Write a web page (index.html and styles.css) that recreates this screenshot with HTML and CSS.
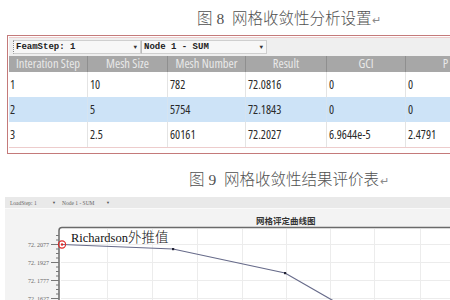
FILE: index.html
```html
<!DOCTYPE html>
<html lang="zh">
<head>
<meta charset="utf-8">
<link rel="stylesheet" href="styles.css">
</head>
<body>
<p class="cap cap1">图 8&nbsp; 网格收敛性分析设置<span class="ret">↵</span></p>
<div class="frame">
  <div class="inner">
    <div class="tb">
      <div class="combo c1"><span>FeamStep: 1</span><span class="arr">▼</span></div>
      <div class="combo c2"><span>Node 1 - SUM</span><span class="arr">▼</span></div>
    </div>
    <div class="grid">
      <div class="h">Interation Step</div>
      <div class="h">Mesh Size</div>
      <div class="h">Mesh Number</div>
      <div class="h">Result</div>
      <div class="h">GCI</div>
      <div class="h">P</div>

      <div class="c">1</div>
      <div class="c">10</div>
      <div class="c">782</div>
      <div class="c">72.0816</div>
      <div class="c">0</div>
      <div class="c">0</div>

      <div class="c sel">2</div>
      <div class="c sel">5</div>
      <div class="c sel">5754</div>
      <div class="c sel">72.1843</div>
      <div class="c sel">0</div>
      <div class="c sel">0</div>

      <div class="c">3</div>
      <div class="c">2.5</div>
      <div class="c">60161</div>
      <div class="c">72.2027</div>
      <div class="c">6.9644e-5</div>
      <div class="c">2.4791</div>
    </div>
  </div>
</div>
<p class="cap cap2">图 9&nbsp; 网格收敛性结果评价表<span class="ret">↵</span></p>
<div class="chart">
  <div class="ctb">
    <span class="cc cc1">LoadStep: 1</span><span class="carr">▼</span>
    <span class="cc cc2">Node 1 - SUM</span><span class="carr">▼</span>
  </div>
  <svg class="plot" width="450" height="92" viewBox="0 0 450 92" xmlns="http://www.w3.org/2000/svg">
    <rect x="5" y="0" width="445" height="92" fill="#f3f3f3"/>
    <line x1="5" y1="0.5" x2="450" y2="0.5" stroke="#fafafa"/>
    <text x="256" y="16" font-family="Noto Sans CJK SC, sans-serif" font-size="8.5" font-weight="700" fill="#333">网格评定曲线图</text>
    <rect x="59" y="19.5" width="420" height="100" rx="3" fill="#fff" stroke="#6a6a6a" stroke-width="1.5"/>
    <g stroke="#ececec" stroke-width="1">
      <line x1="107.5" y1="21" x2="107.5" y2="92"/>
      <line x1="152.5" y1="21" x2="152.5" y2="92"/>
      <line x1="197.5" y1="21" x2="197.5" y2="92"/>
      <line x1="242.5" y1="21" x2="242.5" y2="92"/>
      <line x1="286.5" y1="21" x2="286.5" y2="92"/>
      <line x1="330.5" y1="21" x2="330.5" y2="92"/>
      <line x1="374.5" y1="21" x2="374.5" y2="92"/>
      <line x1="420.5" y1="21" x2="420.5" y2="92"/>
      <line x1="61" y1="36.5" x2="450" y2="36.5"/>
      <line x1="61" y1="54.5" x2="450" y2="54.5"/>
      <line x1="61" y1="72.5" x2="450" y2="72.5"/>
      <line x1="61" y1="90.5" x2="450" y2="90.5"/>
    </g>
    <g font-family="Liberation Serif, serif" font-size="6" fill="#666" text-anchor="end">
      <text x="49" y="38.5">72. 2077</text>
      <text x="49" y="56.5">72. 1927</text>
      <text x="49" y="74.5">72. 1777</text>
      <text x="49" y="92.5">72. 1627</text>
    </g>
    <g stroke="#777" stroke-width="1">
      <line x1="51" y1="36.5" x2="59" y2="36.5"/>
      <line x1="51" y1="54.5" x2="59" y2="54.5"/>
      <line x1="51" y1="72.5" x2="59" y2="72.5"/>
      <line x1="51" y1="90.5" x2="59" y2="90.5"/>
      <path d="M56 27.5h3M56 32h3M56 41h3M56 45.5h3M56 50h3M56 59h3M56 63.5h3M56 68h3M56 77h3M56 81.5h3M56 86h3"/>
    </g>
    <polyline points="62,36.5 173,41 285,65 332,92 345,100" fill="none" stroke="#676b8a" stroke-width="1.2"/>
    <rect x="172" y="40" width="2.2" height="2.2" fill="#223"/>
    <rect x="284" y="64" width="2.2" height="2.2" fill="#223"/>
    <circle cx="62" cy="36.5" r="3.6" fill="none" stroke="#e02828" stroke-width="1.1"/>
    <circle cx="62" cy="36.5" r="1.2" fill="#e02828"/>
    <text x="71" y="33.7" font-family="Liberation Serif, serif" font-size="12.5" fill="#111">Richardson<tspan font-family="Noto Sans CJK SC, sans-serif" font-size="13.5" font-weight="300">外推值</tspan></text>
  </svg>
</div>
</body>
</html>
```

FILE: styles.css
```css
html, body {
  margin: 0;
  padding: 0;
  overflow: hidden;
  background: #fff;
}
body {
  width: 450px;
  height: 300px;
  font-family: "Liberation Serif", "Noto Sans CJK SC", serif;
}
.cap {
  margin: 0;
  box-sizing: border-box;
  font-size: 15.5px;
  line-height: 20px;
  color: #505050;
  font-weight: 300;
  white-space: nowrap;
  font-family: "Liberation Serif", "Noto Sans CJK SC", serif;
}
.cap1 {
  height: 35px;
  padding: 9px 0 0 197px;
}
.cap2 {
  height: 39px;
  padding: 16px 0 0 189px;
}
.ret {
  font-size: 11px;
  color: #8a8a8a;
  margin-left: 1px;
}
.frame {
  margin-left: 7px;
  width: 443px;
  height: 119px;
  overflow: hidden;
  box-sizing: border-box;
  border: 1px solid #c47a7a;
  border-right: 0;
  padding: 1px 0 5px 1px;
  background: #fff;
}
.inner {
  width: 480px;
  border-top: 1px solid #edcccc;
  border-bottom: 1px solid #edcccc;
}
.tb {
  height: 18px;
  background: #efefef;
  display: flex;
  align-items: center;
  padding-left: 4px;
  box-sizing: border-box;
}
.combo {
  height: 14px;
  box-sizing: border-box;
  border: 1px solid #cfcfcf;
  background: #f7f7f7;
  display: flex;
  align-items: center;
  justify-content: space-between;
  padding: 0 3px 0 2px;
  font-family: "Liberation Mono", monospace;
  font-weight: 700;
  font-size: 9px;
  color: #222;
}
.c1 {
  width: 128px;
  border-left: 1px dotted #888;
}
.c2 {
  width: 126px;
  border-left-color: #bbb;
}
.arr {
  font-size: 6px;
  color: #333;
}
.grid {
  display: grid;
  grid-template-columns: 78px 80px 78px 81px 79px 80px;
  grid-template-rows: 16px 25px 25px 25px;
  font-family: "Open Sans", "Noto Sans", sans-serif;
  font-stretch: 78%;
}
.h {
  background: #a7a7a7;
  color: #e9e9e9;
  font-size: 12.5px;
  line-height: 16px;
  text-align: center;
  white-space: nowrap;
  overflow: hidden;
  border-left: 1px solid #8f8f8f;
}
.h:first-child {
  border-left: 0;
}
.c {
  font-size: 12px;
  line-height: 25px;
  color: #2a2a2a;
  padding-left: 2px;
  border-left: 1px solid #e4e4e4;
  white-space: nowrap;
  background: #fff;
}
.grid .c:nth-child(6n+1) {
  border-left: 0;
  padding-left: 1px;
}
.c.sel {
  background: #cde3f7;
  border-left-color: #d6e4f0;
}
.chart {
  padding-top: 4px;
}
.ctb {
  height: 11px;
  margin-left: 5px;
  background: #e9e9e9;
  display: flex;
  align-items: center;
  font-family: "Liberation Serif", serif;
  font-size: 5.5px;
  color: #666;
  padding-left: 5px;
  white-space: nowrap;
}
.cc1 {
  width: 42px;
}
.cc2 {
  width: 44px;
  margin-left: 6px;
}
.carr {
  font-size: 4px;
  color: #555;
}
.plot {
  display: block;
}
```
